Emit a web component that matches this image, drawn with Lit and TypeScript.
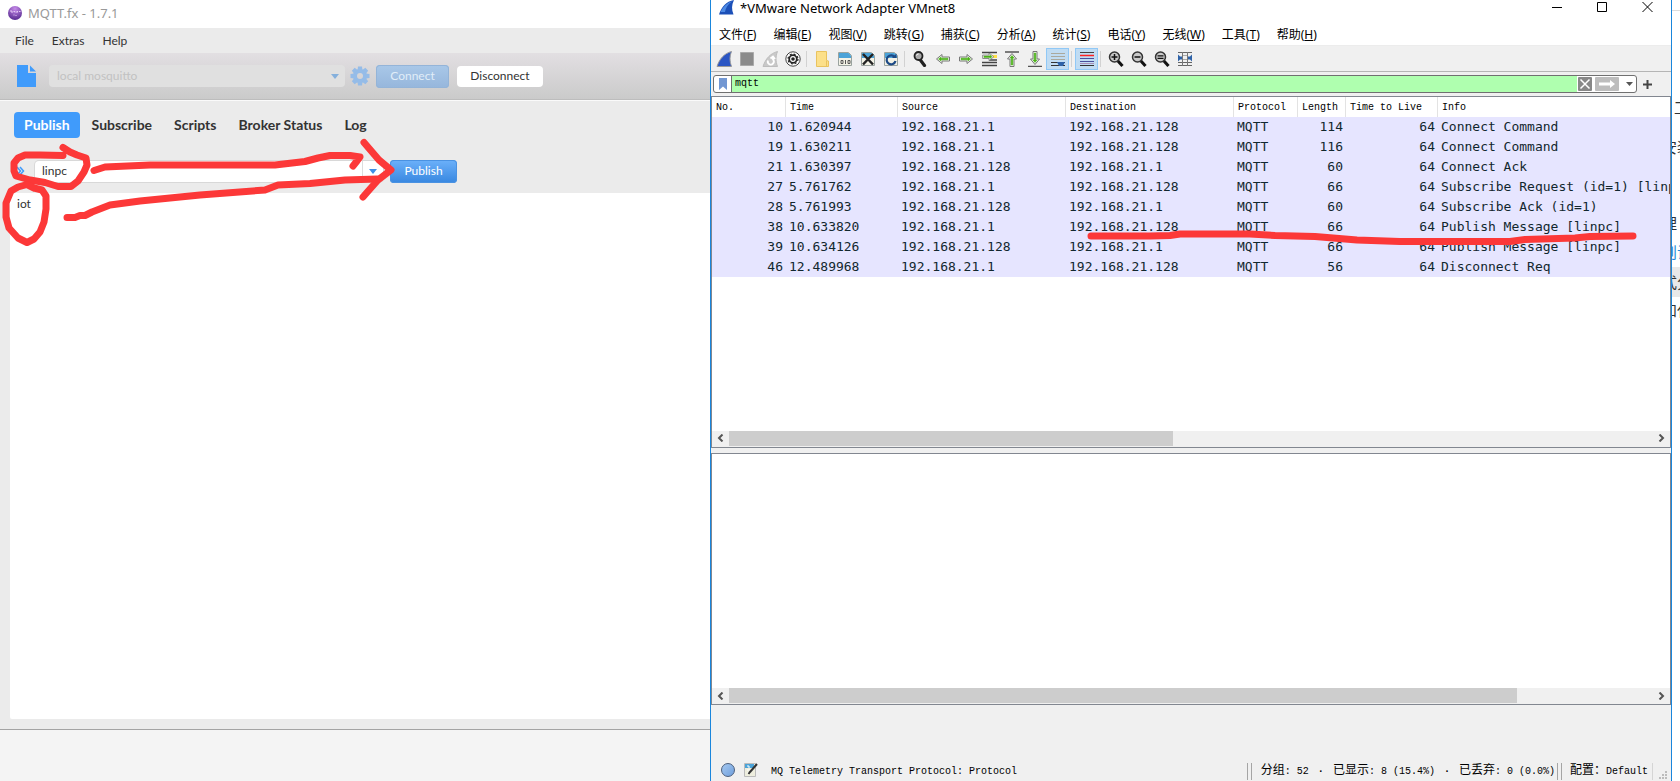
import { LitElement, html, css, svg } from "lit";
import { customElement } from "lit/decorators.js";
import { classMap } from "lit/directives/class-map.js";

const resets = css`
  * { box-sizing: border-box; }
  button, input, select, textarea {
    margin: 0; padding: 0; border: 0; background: none;
    font: inherit; color: inherit; outline: none; border-radius: 0;
  }
  svg { display: block; flex: none; }
`;

@customElement("mqtt-window")
class MqttWindow extends LitElement {
  static styles = [resets, css`
    :host {
      display: flex; flex-direction: column; min-width: 0; overflow: hidden;
      background: #ebebeb; color: #333; font: 12px/16px Lato, "Open Sans", sans-serif;
    }
    .title {
      display: flex; align-items: center; gap: 6px; height: 28px; padding: 0 8px 2px;
      background: #fff; color: #999; font: 13px/16px "Noto Sans", sans-serif;
    }
    .menu { display: flex; gap: 18px; height: 25px; padding: 0 15px; align-items: center; }
    .toolbar {
      display: flex; align-items: center; height: 48px; padding: 0 17px 1px;
      background: linear-gradient(#e2dfe2, #cacaca); border-bottom: 1px solid #fafafa;
      box-shadow: inset 0 -1px #bdbdbd;
    }
    .profile { position: relative; display: flex; width: 296px; margin: 0 5px 0 12px; }
    .profile select {
      appearance: none; width: 100%; height: 22px; padding: 0 8px; border-radius: 4px;
      background: #e0e0e0; color: #c2c2c2; opacity: 1;
    }
    .profile svg { position: absolute; right: 6px; top: 9px; }
    .btn { height: 23px; border-radius: 4px; }
    .connect { width: 73px; margin: 0 8px 0 6px; color: #e0edf8; background: linear-gradient(#a9c8e8, #96b6dc); box-shadow: inset 0 0 0 1px #94b4d8; }
    .disconnect { width: 86px; height: 21px; background: #fff; }
    .tabs { display: flex; gap: 2px; padding: 11px 14px 21px; }
    .tab { height: 26px; padding: 0 10px; border-radius: 4px; font: 700 14px/26px Lato, sans-serif; }
    .tab.active { background: #409bfb; color: #fff; }
    .topic { display: flex; align-items: center; padding: 0 16px 0 17px; height: 24px; }
    .history { width: 18px; height: 20px; }
    .combo { display: flex; width: 348px; height: 21px; border-radius: 4px; background: #fff; box-shadow: 0 0 0 1px #d8d8d8; margin-right: 7px; }
    .combo input { flex: 1; min-width: 0; padding: 0 7px; }
    .combo button { width: 21px; border-left: 1px solid #ddd; display: grid; place-items: center; }
    .publish { width: 67px; color: #fff; background: linear-gradient(#6cb1fa, #3887e0); box-shadow: inset 0 0 0 1px #4a92e2; }
    .body { flex: 1; display: flex; min-height: 0; padding: 10px 0 10px 10px; }
    textarea { flex: 1; resize: none; background: #fff; border-radius: 2px 0 0 2px; padding: 3px 7px; font: 12px/16px Lato, sans-serif; }
    .foot { height: 52px; background: #f4f4f4; border-top: 1px solid #a3a3a3; }
  `];
  render() {
    const tabs = ["Publish", "Subscribe", "Scripts", "Broker Status", "Log"];
    return html`
      <div class="title">
        <svg width="14" height="16" viewBox="0 0 14 16">
          <defs><radialGradient id="orb" cx=".5" cy=".2" r=".9"><stop offset="0" stop-color="#c58ae8"/><stop offset="1" stop-color="#4a1f86"/></radialGradient></defs>
          <circle cx="7" cy="8" r="7" fill="url(#orb)"/>
          <path d="M2 6h2v2M5.500 6.500h1.500v1M8.500 6.500h1.500M9 7v1M11 6.500h1.500M5.500 10h1M7.500 10.500h1" stroke="#e3c8f5" fill="none"/>
        </svg>
        <span>MQTT.fx - 1.7.1</span>
      </div>
      <nav class="menu"><button>File</button><button>Extras</button><button>Help</button></nav>
      <div class="toolbar">
        <svg width="20" height="22" viewBox="0 0 20 22" fill="#409bfb"><path d="M0 0h11v8h8v14H0z"/><path d="M13 .500 19 6.500h-6z"/></svg>
        <div class="profile">
          <select aria-label="Connection profile" disabled><option>local mosquitto</option></select>
          <svg width="8" height="5" viewBox="0 0 8 5"><path d="M0 0h8L4 5z" fill="#85b0dc"/></svg>
        </div>
        <svg width="20" height="20" viewBox="-10 -10 20 20" fill="#95bce8">
          <path fill-rule="evenodd" d="M-7 0a7 7 0 1 0 14 0a7 7 0 1 0-14 0zM-3 0a3 3 0 1 1 6 0a3 3 0 1 1-6 0z"/>
          ${[0, 45, 90, 135, 180, 225, 270, 315].map((a) => svg`<path d="M-2-9.500h4l.5 4h-5z" transform="rotate(${a})"/>`)}
        </svg>
        <button class="btn connect">Connect</button>
        <button class="btn disconnect">Disconnect</button>
      </div>
      <div class="tabs">${tabs.map((t, i) => html`<button class=${classMap({ tab: true, active: i === 0 })}>${t}</button>`)}</div>
      <div class="topic">
        <button class="history" aria-label="Topic history"><svg width="8" height="10" viewBox="0 0 8 10"><path d="M0 1l3.500 4L0 9M3 1l3.500 4L3 9" fill="none" stroke="#409bfb" stroke-width="1.500"/></svg></button>
        <div class="combo">
          <input aria-label="Topic" value="linpc">
          <button aria-label="Show topics"><svg width="8" height="5" viewBox="0 0 8 5"><path d="M0 0h8L4 5z" fill="#3e8fe6"/></svg></button>
        </div>
        <button class="btn publish">Publish</button>
      </div>
      <div class="body"><textarea aria-label="Message" .value=${"iot"}></textarea></div>
      <div class="foot"></div>
    `;
  }
}

const fin = (fill: string, edge: string) => svg`<path d="M1 15.500C3.500 8 8 2.500 15.500.5 13.500 5.500 13.500 10 15.500 15.500z" fill=${fill} stroke=${edge}/>`;
const arrow = (t: string) => svg`<g transform=${t}><path d="M1.500 8 7 3.500v2.500h7.500v4H7v2.500z" fill="#fff" stroke="#777"/><path d="M3.500 8 6 6v1.200h7v1.600H6V10z" fill="#4db31a" stroke="#4db31a" stroke-width=".6"/></g>`;
const sheet = svg`<path d="M1.500 1.500h10l3 3v10h-13z" fill="#f3f2e6" stroke="#9aa39f"/><path d="M2 2h9.500L14 4.500V7H2z" fill="#4ba3d8"/>`;
const lens = (inner: unknown) => svg`<path d="m9.500 9.500 5 5.500" stroke="#111" stroke-width="3"/><circle cx="6.500" cy="6" r="5" fill="#c9c9c9" stroke="#333" stroke-width="1.500"/>${inner}`;

const icons: Record<string, unknown> = {
  start: fin("#2b56c4", "#9a9a9a"),
  stop: svg`<path d="M1.500 1.500h13v13h-13z" fill="#8b8b8b" stroke="#a9a9a9"/>`,
  restart: svg`${fin("#c9c9c9", "#bdbdbd")}<path d="M6 9.500a3 3 0 1 0 5-1V5.500M8.500 7.500 11 5.500l2 2.500" fill="none" stroke="#fff" stroke-width="1.800"/>`,
  options: svg`<circle cx="8" cy="8" r="7.200" fill="#fff" stroke="#444"/><circle cx="8" cy="8" r="3.800" fill="none" stroke="#222" stroke-width="1.800"/><circle cx="8" cy="8" r="5" fill="none" stroke="#222" stroke-width="1.200" stroke-dasharray="2 1.930"/><circle cx="8" cy="8" r="1.800" fill="#222"/>`,
  open: svg`<path d="M2.500.5h10v9l2 .5v5.500h-12z" fill="#fce08a" stroke="#e9c35f"/><path d="M12.500 10v5.500" stroke="#e9c35f"/>`,
  save: svg`${sheet}<path d="M4 9.500h2v3H4zM8.500 9v4M11 9.500h2v3h-2z" fill="none" stroke="#555"/>`,
  close: svg`${sheet}<path d="m3 3 10 10.500M13 3 3 13.500" stroke="#222" stroke-width="2.500"/>`,
  reload: svg`${sheet}<path d="M12 6.500A4.500 4.500 0 1 0 12.500 10" fill="none" stroke="#1d4a86" stroke-width="2.200"/><path d="M9 7h4.500V2.500z" fill="#1d4a86"/>`,
  find: svg`<path d="m8 8.500 4.500 6" stroke="#222" stroke-width="3.200" stroke-linecap="round"/><circle cx="6.500" cy="5" r="4" fill="#aaa" stroke="#222" stroke-width="1.800"/><path d="M4.500 4.500a2 2 0 0 1 2-1.500" stroke="#fff" fill="none"/>`,
  back: arrow(""),
  forward: arrow("matrix(-1 0 0 1 16 0)"),
  jump: svg`<path d="M1 1.500h15M8 5h8M8 9h8M1 11.500h15M1 14.500h15" stroke="#444" stroke-width="1.400"/><path d="M11 4h5v3h-5z" fill="#ffe045"/><g transform="matrix(-.85 0 0 .85 14 -1)"><path d="M1.500 8 7 3.500v2.500h7.500v4H7v2.500z" fill="#fff" stroke="#777"/><path d="M3.500 8 6 6v1.200h7v1.600H6V10z" fill="#4db31a" stroke="#4db31a" stroke-width=".6"/></g>`,
  top: svg`<path d="M1 1h14" stroke="#555" stroke-width="1.500"/>${arrow("matrix(0 1 1 0 0 1)")}`,
  bottom: svg`<path d="M1 15.500h14" stroke="#555" stroke-width="1.500"/>${arrow("matrix(0 -1 1 0 0 15)")}`,
  scroll: svg`<path d="M1 2.500h14M1 5.500h14M1 8.500h14" stroke="#aaa99e"/><path d="M1 11.500h14M1 14.500h14" stroke="#333"/><path d="M7 11h8l-2 4H9z" fill="#2e62a8"/>`,
  color: svg`<path d="M1 1.500h14" stroke="#444"/><path d="M1 4.500h14" stroke="#f22" stroke-width="1.500"/><path d="M1 7.500h14M1 10.500h14" stroke="#4a4f9c"/><path d="M1 12.500h14" stroke="#a890b8"/><path d="M1 14.500h14" stroke="#333"/>`,
  zoomIn: lens(svg`<path d="M3.500 6h6M6.500 3v6" stroke="#111" stroke-width="1.500"/>`),
  zoomOut: lens(svg`<path d="M3.500 6h6" stroke="#111" stroke-width="1.500"/>`),
  zoomReset: lens(svg`<path d="M3.500 4.800h6M3.500 7.300h6" stroke="#111" stroke-width="1.300"/>`),
  resize: svg`<path d="M1 1.500h14M1 11.500h14M1 14.500h14" stroke="#666"/><path d="M5 4.500h6M5 8.500h6" stroke="#aaa"/><path d="M5.500 1v14M10.500 1v14" stroke="#777"/><path d="M1 3.500v7l2-2h2v-3H3zM15 3.500v7l-2-2h-2v-3h2z" fill="#2e62a8"/>`,
};

const toolGroups: [string, string][][] = [
  [["start", "Start capture"], ["stop", "Stop capture"], ["restart", "Restart capture"], ["options", "Capture options"]],
  [["open", "Open"], ["save", "Save"], ["close", "Close"], ["reload", "Reload"]],
  [["find", "Find packet"], ["back", "Back"], ["forward", "Forward"], ["jump", "Go to packet"], ["top", "First packet"], ["bottom", "Last packet"], ["scroll", "Auto scroll"]],
  [["color", "Colorize"]],
  [["zoomIn", "Zoom in"], ["zoomOut", "Zoom out"], ["zoomReset", "Normal size"], ["resize", "Resize columns"]],
];

const menus = [["文件", "F"], ["编辑", "E"], ["视图", "V"], ["跳转", "G"], ["捕获", "C"], ["分析", "A"], ["统计", "S"], ["电话", "Y"], ["无线", "W"], ["工具", "T"], ["帮助", "H"]];

const columns: [string, string][] = [["No.", "no"], ["Time", "time"], ["Source", "addr"], ["Destination", "addr"], ["Protocol", "proto"], ["Length", "len"], ["Time to Live", "ttl"], ["Info", "info"]];

const host = "192.168.21.1";
const broker = "192.168.21.128";
const packets = [
  ["10", "1.620944", host, broker, "MQTT", "114", "64", "Connect Command"],
  ["19", "1.630211", host, broker, "MQTT", "116", "64", "Connect Command"],
  ["21", "1.630397", broker, host, "MQTT", "60", "64", "Connect Ack"],
  ["27", "5.761762", host, broker, "MQTT", "66", "64", "Subscribe Request (id=1) [linpc]"],
  ["28", "5.761993", broker, host, "MQTT", "60", "64", "Subscribe Ack (id=1)"],
  ["38", "10.633820", host, broker, "MQTT", "66", "64", "Publish Message [linpc]"],
  ["39", "10.634126", broker, host, "MQTT", "66", "64", "Publish Message [linpc]"],
  ["46", "12.489968", host, broker, "MQTT", "56", "64", "Disconnect Req"],
];

@customElement("capture-window")
class CaptureWindow extends LitElement {
  static styles = [resets, css`
    :host {
      display: flex; flex-direction: column; min-width: 0; overflow: hidden;
      border: solid #1a86dc; border-width: 0 1px; background: #f0f0f0; color: #000;
      font: 10px/16px "Liberation Mono", "Noto Sans CJK SC", monospace;
    }
    .title { display: flex; gap: 6px; height: 24px; padding: 0 18px 0 8px; background: #fff; font: 13px/16px "Noto Sans", sans-serif; }
    .title span { flex: 1; white-space: nowrap; }
    .caption { display: flex; gap: 34px; }
    .caption button { height: 14px; }
    .menu {
      display: flex; gap: 17px; height: 22px; padding: 0 8px; background: #fff; border-bottom: 1px solid #ececec;
      font: 12px/22px "Noto Sans", "Noto Sans CJK SC", sans-serif; white-space: nowrap;
    }
    .tools { display: flex; align-items: center; height: 26px; padding: 1px 1px 0; border-bottom: 1px solid #b5b5b5; }
    .tool { display: grid; place-items: center; width: 23px; height: 22px; }
    .tool.on { background: #c0dcf3; box-shadow: inset 0 0 0 1px #90c8f6; }
    .sep { width: 1px; height: 16px; margin: 0 3px 0 2px; background: #d2d2d2; }
    .filter { display: flex; align-items: center; gap: 6px; height: 24px; padding: 0 19px 0 2px; }
    .field { flex: 1; min-width: 0; display: flex; align-items: center; height: 18px; border: 1px solid #707070; border-radius: 3px; background: #fff; overflow: hidden; }
    .mark { width: 17px; height: 16px; display: grid; place-items: center; }
    .field input { flex: 1; min-width: 0; height: 16px; padding: 0 3px; background: #afffaf; border-left: 1px solid #707070; }
    .clear { margin: 0 3px 0 1px; }
    .drop { width: 17px; padding-left: 3px; display: grid; place-items: center; }
    .pane { display: flex; flex-direction: column; min-height: 0; background: #fff; border: 1px solid #828790; }
    .pane.list { flex: 352; }
    .pane.detail { flex: 252; margin-top: 5px; }
    .view { flex: 1; min-height: 0; overflow: hidden; }
    table { width: 100%; table-layout: fixed; border-collapse: separate; border-spacing: 0; }
    th { height: 20px; padding: 2px 4px 0 4px; border-right: 1px solid #e3e3e3; text-align: left; font-weight: 400; line-height: 16px; white-space: nowrap; }
    th:last-child { border-right: 0; }
    td { height: 20px; padding: 0 3px; background: #e6e5ff; color: #12272e; font: 13px/20px "DejaVu Sans Mono", monospace; white-space: nowrap; overflow: hidden; }
    td.no, td.len, td.ttl { text-align: right; }
    th.no { width: 74px; } th.time { width: 112px; } th.addr { width: 168px; }
    th.proto { width: 64px; } th.len { width: 48px; } th.ttl { width: 92px; }
    .bar { display: grid; grid-template-columns: 17px 1fr 17px; height: 16px; padding-bottom: 1px; background: #f0f0f0; }
    .bar button { display: grid; place-items: center; }
    .thumb { height: 15px; background: #cdcdcd; }
    .list .thumb { width: 48%; }
    .detail .thumb { width: 85.3%; }
    .status { display: flex; align-items: flex-end; height: 76px; padding: 0 3px 1px 10px; white-space: nowrap; }
    .status > * { flex: none; }
    .led { width: 14px; height: 14px; border-radius: 50%; border: 1px solid #4b5f7d; background: linear-gradient(135deg, #a5c8f0, #6f9fdc); margin: 0 9px 3px 0; }
    .note { margin: 0 13px 3px 0; }
    .status .msg { flex: 1; min-width: 0; overflow: hidden; }
    .grip { width: 5px; height: 17px; border: solid #a5a5a5; border-width: 0 1px; }
    .counts { margin: 0 2px 0 9px; }
    .profile { padding: 0 4px 0 8px; border-right: 1px solid #d5d5d5; }
    .zh { font-size: 12px; font-family: "Noto Sans CJK SC", sans-serif; line-height: 12px; }
    .dot { display: inline-block; width: 12px; text-align: center; font-weight: 700; }
    .size { margin-left: 6px; }
  `];
  private bar() {
    return html`<div class="bar">
      <button aria-label="Scroll left"><svg width="7" height="8" viewBox="0 0 7 8"><path d="M5.500.5 2 4l3.500 3.500" fill="none" stroke="#555" stroke-width="2"/></svg></button>
      <div class="thumb"></div>
      <button aria-label="Scroll right"><svg width="7" height="8" viewBox="0 0 7 8"><path d="M1.500.5 5 4 1.500 7.500" fill="none" stroke="#555" stroke-width="2"/></svg></button>
    </div>`;
  }
  render() {
    return html`
      <div class="title">
        <svg width="15" height="15" viewBox="0 0 15 15">
          <path d="M0 14.500C2.500 7 7 1.500 15 0c-2.500 5-2.500 9.500-.5 14.500z" fill="#1c50b8"/><path d="M1.500 12C4 7 7.500 3 13 1.200 8.500 4.500 6.500 8 6 12z" fill="#4d8ae4"/>
        </svg>
        <span>*VMware Network Adapter VMnet8</span>
        <div class="caption">
          <button aria-label="Minimize"><svg width="11" height="14" viewBox="0 0 11 14"><path d="M0 7.500h10" stroke="#000"/></svg></button>
          <button aria-label="Maximize"><svg width="11" height="14" viewBox="0 0 11 14"><path d="M.5 2.500h9v9h-9z" fill="none" stroke="#000"/></svg></button>
          <button aria-label="Close"><svg width="11" height="14" viewBox="0 0 11 14"><path d="m.5 2 10 10M10.500 2l-10 10" stroke="#000"/></svg></button>
        </div>
      </div>
      <nav class="menu">${menus.map(([name, key]) => html`<button>${name}(<u>${key}</u>)</button>`)}</nav>
      <div class="tools">
        ${toolGroups.map((group, g) => html`${g ? html`<i class="sep"></i>` : ""}${group.map(([id, label]) => html`
          <button class=${classMap({ tool: true, on: id === "scroll" || id === "color" })} aria-label=${label}><svg width="16" height="16" viewBox="0 0 16 16">${icons[id]}</svg></button>`)}`)}
      </div>
      <div class="filter">
        <div class="field">
          <button class="mark" aria-label="Filter bookmarks"><svg width="8" height="12" viewBox="0 0 8 12"><path d="M0 0h8v12L4 8.500 0 12z" fill="#7297d3"/></svg></button>
          <input aria-label="Display filter" value="mqtt">
          <button class="clear" aria-label="Clear filter"><svg width="14" height="14" viewBox="0 0 14 14"><rect width="14" height="14" rx="1" fill="#888"/><path d="m2.500 2.500 9 9M11.500 2.500l-9 9" stroke="#fff" stroke-width="1.500"/></svg></button>
          <button aria-label="Apply filter"><svg width="24" height="14" viewBox="0 0 24 14"><rect width="24" height="14" rx="1" fill="#bdbdbd"/><path d="M4 5.500h11V3l5 4-5 4V8.500H4z" fill="#fff"/></svg></button>
          <button class="drop" aria-label="Recent filters"><svg width="7" height="4" viewBox="0 0 7 4"><path d="M0 0h7L3.500 4z" fill="#555"/></svg></button>
        </div>
        <button aria-label="Add filter"><svg width="9" height="9" viewBox="0 0 9 9"><path d="M0 4.500h9M4.500 0v9" stroke="#444" stroke-width="2"/></svg></button>
      </div>
      <div class="pane list">
        <div class="view">
          <table>
            <thead><tr>${columns.map(([t, c]) => html`<th class=${c}>${t}</th>`)}</tr></thead>
            <tbody>${packets.map((p) => html`<tr>${p.map((v, i) => html`<td class=${columns[i][1]}>${v}</td>`)}</tr>`)}</tbody>
          </table>
        </div>
        ${this.bar()}
      </div>
      <div class="pane detail"><div class="view"></div>${this.bar()}</div>
      <div class="status">
        <button class="led" aria-label="Expert information"></button>
        <button class="note" aria-label="Capture comment"><svg width="14" height="14" viewBox="0 0 14 14"><path d="M.5.5h11v13H.5z" fill="#eeeede" stroke="#bbb"/><path d="M1 1h9v4H1z" fill="#4ba3d8"/><path d="M3 3h2v2M3 7h3M3 10h3" stroke="#fff" fill="none"/><path d="m13 1-7 8-1.500 2" stroke="#333" stroke-width="2" fill="none"/></svg></button>
        <span class="msg">MQ Telemetry Transport Protocol: Protocol</span>
        <i class="grip"></i>
        <span class="counts"><span class="zh">分组</span>: 52 <span class="dot">·</span> <span class="zh">已显示</span>: 8 (15.4%) <span class="dot">·</span> <span class="zh">已丢弃</span>: 0 (0.0%)</span>
        <i class="grip"></i>
        <span class="profile"><span class="zh">配置：</span>Default</span>
        <svg class="size" width="9" height="9" viewBox="0 0 9 9" fill="#bcbcbc"><path d="M6 0h2v2H6zM3 3h2v2H3zM6 3h2v2H6zM0 6h2v2H0zM3 6h2v2H3zM6 6h2v2H6z"/></svg>
      </div>
    `;
  }
}

@customElement("app-root")
class AppRoot extends LitElement {
  static styles = css`
    :host {
      position: relative; display: grid; grid-template-columns: 710fr 962fr 8px;
      height: 100vh; min-height: 480px; overflow: hidden; background: #fff;
    }
    .behind { overflow: hidden; padding-top: 10px; font: 15px/26px "Noto Sans CJK SC", sans-serif; color: #333; white-space: nowrap; }
    .behind p { margin: 0 0 0 -10px; }
    .rule { height: 1px; background: #ddd; }
    .behind .tool { margin: 83px 0 0 2px; }
    .behind .set { margin-top: 14px; }
    .behind .group { margin-top: 50px; }
    .behind .link { margin-top: 3px; color: #1e88d6; }
    .behind .current { margin-top: 2px; padding: 2px 0 2px; background: #e8e8e8; }
    .ink { position: absolute; left: 0; top: 0; pointer-events: none; }
  `;
  render() {
    return html`
      <mqtt-window></mqtt-window>
      <capture-window></capture-window>
      <div class="behind">
        <div class="rule"></div>
        <p class="tool">工</p>
        <p class="set">安装</p>
        <p class="group">理</p>
        <p class="link">则试</p>
        <p class="current">式分</p>
        <p>和代</p>
      </div>
      <svg class="ink" width="1680" height="781" viewBox="0 0 1680 781" fill="none" stroke="#fc3838" stroke-width="7" stroke-linecap="round" stroke-linejoin="round">
        <path d="M63 147.500 70 152 77 155 86 158 87 165 84 172 78 181 71 186.500H58L45 182.500 30 180 16 176 14 171V163L18 158 25 155H40L63 155.500"/>
        <path d="M34 188 42 190 46 196V209L44 222 40 232 34 239 27 242.500 18 238 9 228 6 217V203L11 191 18 187 27 184.500 34 188"/>
        <path d="M94 170.500 105 167 150 165H275L305 161.500 318 158 330 155.500H350L360 157 357 161 353 166"/>
        <path d="M67 217.500H75L80 215.500H85L92 212 110 205 140 201 200 195 265 190 278 185 310 183.500 345 180 377 179"/>
        <path d="M364 142.500 379 160 391 170 378 180 370 189 363 197"/>
        <path d="M1091 236H1150L1170 235.500 1180 234H1250L1275 235.500 1315 236.500 1357 240 1400 241.500H1510L1525 239.500 1575 238 1590 236.500 1633 236"/>
      </svg>
    `;
  }
}
